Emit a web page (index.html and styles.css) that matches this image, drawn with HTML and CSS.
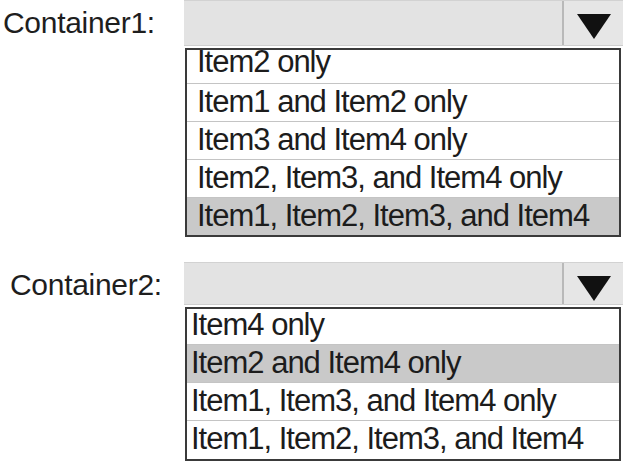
FILE: index.html
```html
<!DOCTYPE html>
<html lang="en">
<head>
<meta charset="utf-8">
<title>Containers</title>
<link rel="stylesheet" href="styles.css">
</head>
<body>
<div class="page">
  <div class="group">
    <div class="label label-1 combo-h-1">Container1:</div>
    <div class="picker">
      <div class="combo combo-h-1">
        <div class="combo-field"></div>
        <div class="combo-btn">
          <svg width="34" height="25" viewBox="0 0 34 25"><polygon points="0,0 34,0 17,25" fill="#111"/></svg>
        </div>
      </div>
      <div class="list list-1">
        <div class="list-inner list-inner-1">
          <div class="row row-1 row-scrolled">Item2 only</div>
          <div class="row row-1">Item1 and Item2 only</div>
          <div class="row row-1">Item3 and Item4 only</div>
          <div class="row row-1">Item2, Item3, and Item4 only</div>
          <div class="row row-1 selected">Item1, Item2, Item3, and Item4</div>
        </div>
      </div>
    </div>
  </div>

  <div class="group group-2">
    <div class="label label-2 combo-h-2">Container2:</div>
    <div class="picker">
      <div class="combo combo-h-2">
        <div class="combo-field"></div>
        <div class="combo-btn">
          <svg width="34" height="25" viewBox="0 0 34 25"><polygon points="0,0 34,0 17,25" fill="#111"/></svg>
        </div>
      </div>
      <div class="list list-2">
        <div class="list-inner list-inner-2">
          <div class="row row-2">Item4 only</div>
          <div class="row row-2 selected">Item2 and Item4 only</div>
          <div class="row row-2">Item1, Item3, and Item4 only</div>
          <div class="row row-2">Item1, Item2, Item3, and Item4</div>
        </div>
      </div>
    </div>
  </div>
</div>
</body>
</html>
```

FILE: styles.css
```css
* { box-sizing: border-box; }

html, body {
  margin: 0;
  padding: 0;
  background: #ffffff;
}

body {
  font-family: "Liberation Sans", Arial, sans-serif;
  color: #1c1c1c;
  width: 623px;
  height: 466px;
  overflow: hidden;
}

.page {
  display: flex;
  flex-direction: column;
}

.group {
  display: flex;
  align-items: flex-start;
}

.group-2 {
  margin-top: 25px;
}

.label {
  width: 184px;
  flex: none;
  display: flex;
  align-items: center;
  font-size: 30px;
  letter-spacing: -0.3px;
  color: #1e1e1e;
}

.label-1 { padding-left: 3px; }
.label-2 { padding-left: 10px; padding-top: 2px; }

.picker {
  width: 439px;
  display: flex;
  flex-direction: column;
  gap: 2px;
}

.combo-h-1 { height: 46px; }
.combo-h-2 { height: 43px; }

.combo {
  display: flex;
  background: #e3e3e3;
  border-top: 1px solid #d2d2d2;
  border-bottom: 1px solid #cfcfcf;
}

.combo-field {
  flex: 1;
  border-right: 2px solid #b9b9b9;
}

.combo-btn {
  width: 59px;
  flex: none;
  display: flex;
  justify-content: center;
  align-items: flex-start;
  padding-top: 13px;
  background: #e6e6e6;
}

.combo-btn svg { display: block; }

.list {
  margin-left: 1px;
  width: 436px;
  border: 2px solid #3a3a3a;
  overflow: hidden;
  background: #ffffff;
}

.list-1 { height: 189px; }
.list-2 { height: 154px; }

.list-inner-1 { margin-top: -4px; }
.list-inner-2 { margin-top: -2px; }

.row {
  height: 38px;
  line-height: 36px;
  font-size: 31px;
  letter-spacing: -1px;
  white-space: nowrap;
  border-bottom: 1px solid #c4c4c4;
  color: #1c1c1c;
}

.row:last-child { border-bottom: none; }

.row-scrolled { line-height: 31px; }

.row-1 { padding-left: 10px; }
.row-2 { padding-left: 4px; }

.selected {
  background: #c9c9c9;
}
```
